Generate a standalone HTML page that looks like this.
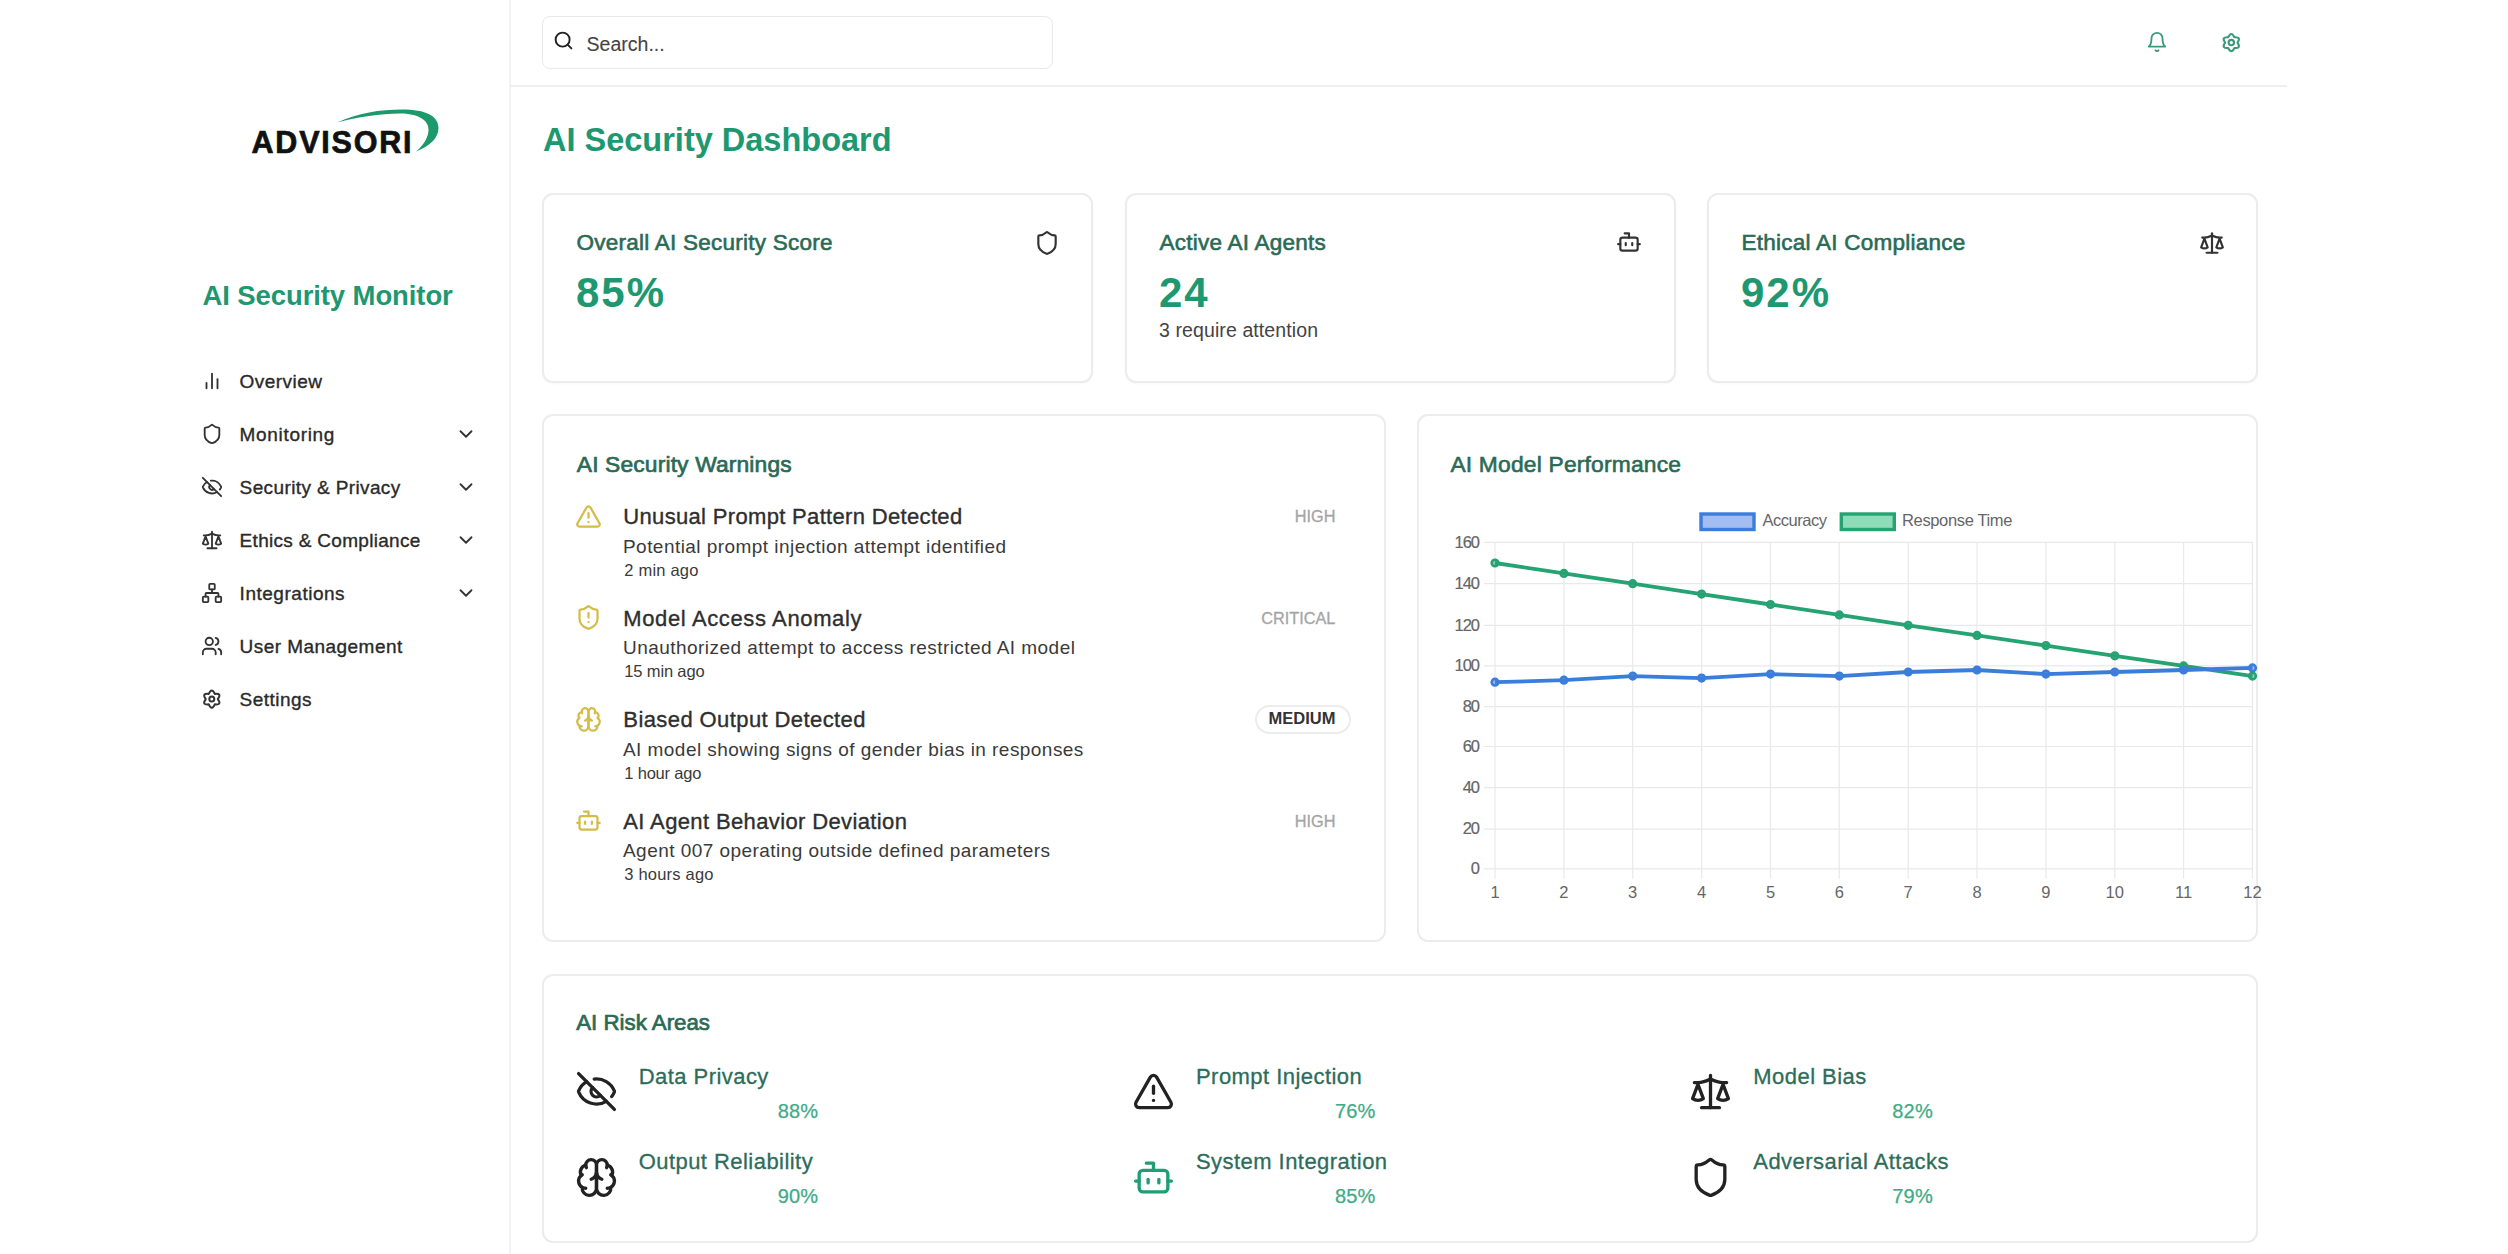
<!DOCTYPE html>
<html><head><meta charset="utf-8"><title>AI Security Dashboard</title>
<style>
html,body{margin:0;padding:0;background:#fff;}
body{width:2508px;height:1254px;position:relative;overflow:hidden;font-family:"Liberation Sans", sans-serif;}
.t{position:absolute;white-space:nowrap;}
.r{position:absolute;}
.i{position:absolute;overflow:visible;}
</style></head><body>
<div class="r" style="left:508.5px;top:0px;width:2px;height:1254px;background:#f3f3f3;"></div>
<div class="t" style="left:251.5px;top:127.2px;font-size:30.5px;line-height:30.5px;color:#111;font-weight:700;letter-spacing:1.8px;-webkit-text-stroke:0.7px #111;">ADVISORI</div>
<svg class="i" style="left:330px;top:100px;width:115px;height:60px" viewBox="0 0 115 60"><path d="M7,22.5 C28,13 50,9.5 72,9.5 C96,9.5 108.5,16 108.5,28 C108.5,38 100,46 86,51.5 C95,44 98.5,36 98.5,29.5 C98.5,20 88,13.5 70,13.5 C50,13.5 28,17 7,22.5 Z" fill="#1d9a6c"/></svg>
<div class="t" style="left:202.5px;top:281.7px;font-size:27.5px;line-height:27.5px;color:#1d9870;font-weight:700;letter-spacing:-0.1px;">AI Security Monitor</div>
<svg class="i" style="left:201px;top:369.5px;width:22px;height:22px" viewBox="0 0 24 24" fill="none" stroke="#333" stroke-width="2" stroke-linecap="round" stroke-linejoin="round"><line x1="18" x2="18" y1="20" y2="10"/><line x1="12" x2="12" y1="20" y2="4"/><line x1="6" x2="6" y1="20" y2="14"/></svg>
<div class="t" style="left:239.6px;top:371.7px;font-size:19px;line-height:19px;color:#2a2a2a;font-weight:400;-webkit-text-stroke:0.35px #2a2a2a;letter-spacing:0.45px;">Overview</div>
<svg class="i" style="left:201px;top:422.6px;width:22px;height:22px" viewBox="0 0 24 24" fill="none" stroke="#333" stroke-width="2" stroke-linecap="round" stroke-linejoin="round"><path d="M20 13c0 5-3.5 7.5-7.66 8.95a1 1 0 0 1-.67-.01C7.5 20.5 4 18 4 13V6a1 1 0 0 1 1-1c2 0 4.5-1.2 6.24-2.72a1.17 1.17 0 0 1 1.52 0C14.51 3.81 17 5 19 5a1 1 0 0 1 1 1z"/></svg>
<div class="t" style="left:239.6px;top:424.8px;font-size:19px;line-height:19px;color:#2a2a2a;font-weight:400;-webkit-text-stroke:0.35px #2a2a2a;letter-spacing:0.68px;">Monitoring</div>
<svg class="i" style="left:455px;top:422.6px;width:22px;height:22px" viewBox="0 0 24 24" fill="none" stroke="#333" stroke-width="2" stroke-linecap="round" stroke-linejoin="round"><path d="m6 9 6 6 6-6"/></svg>
<svg class="i" style="left:201px;top:475.7px;width:22px;height:22px" viewBox="0 0 24 24" fill="none" stroke="#333" stroke-width="2" stroke-linecap="round" stroke-linejoin="round"><path d="M10.733 5.076a10.744 10.744 0 0 1 11.205 6.575 1 1 0 0 1 0 .696 10.747 10.747 0 0 1-1.444 2.49"/><path d="M14.084 14.158a3 3 0 0 1-4.242-4.242"/><path d="M17.479 17.499a10.75 10.75 0 0 1-15.417-5.151 1 1 0 0 1 0-.696 10.75 10.75 0 0 1 4.446-5.143"/><path d="m2 2 20 20"/></svg>
<div class="t" style="left:239.6px;top:477.9px;font-size:19px;line-height:19px;color:#2a2a2a;font-weight:400;-webkit-text-stroke:0.35px #2a2a2a;letter-spacing:0.38px;">Security &amp; Privacy</div>
<svg class="i" style="left:455px;top:475.7px;width:22px;height:22px" viewBox="0 0 24 24" fill="none" stroke="#333" stroke-width="2" stroke-linecap="round" stroke-linejoin="round"><path d="m6 9 6 6 6-6"/></svg>
<svg class="i" style="left:201px;top:528.8px;width:22px;height:22px" viewBox="0 0 24 24" fill="none" stroke="#333" stroke-width="2" stroke-linecap="round" stroke-linejoin="round"><path d="m16 16 3-8 3 8c-.87.65-1.92 1-3 1s-2.13-.35-3-1Z"/><path d="m2 16 3-8 3 8c-.87.65-1.92 1-3 1s-2.13-.35-3-1Z"/><path d="M7 21h10"/><path d="M12 3v18"/><path d="M3 7h2c2 0 5-1 7-2 2 1 5 2 7 2h2"/></svg>
<div class="t" style="left:239.6px;top:531.0px;font-size:19px;line-height:19px;color:#2a2a2a;font-weight:400;-webkit-text-stroke:0.35px #2a2a2a;letter-spacing:0.3px;">Ethics &amp; Compliance</div>
<svg class="i" style="left:455px;top:528.8px;width:22px;height:22px" viewBox="0 0 24 24" fill="none" stroke="#333" stroke-width="2" stroke-linecap="round" stroke-linejoin="round"><path d="m6 9 6 6 6-6"/></svg>
<svg class="i" style="left:201px;top:581.9px;width:22px;height:22px" viewBox="0 0 24 24" fill="none" stroke="#333" stroke-width="2" stroke-linecap="round" stroke-linejoin="round"><rect x="16" y="16" width="6" height="6" rx="1"/><rect x="2" y="16" width="6" height="6" rx="1"/><rect x="9" y="2" width="6" height="6" rx="1"/><path d="M5 16v-3a1 1 0 0 1 1-1h12a1 1 0 0 1 1 1v3"/><path d="M12 12V8"/></svg>
<div class="t" style="left:239.6px;top:584.1px;font-size:19px;line-height:19px;color:#2a2a2a;font-weight:400;-webkit-text-stroke:0.35px #2a2a2a;letter-spacing:0.52px;">Integrations</div>
<svg class="i" style="left:455px;top:581.9px;width:22px;height:22px" viewBox="0 0 24 24" fill="none" stroke="#333" stroke-width="2" stroke-linecap="round" stroke-linejoin="round"><path d="m6 9 6 6 6-6"/></svg>
<svg class="i" style="left:201px;top:635.0px;width:22px;height:22px" viewBox="0 0 24 24" fill="none" stroke="#333" stroke-width="2" stroke-linecap="round" stroke-linejoin="round"><path d="M16 21v-2a4 4 0 0 0-4-4H6a4 4 0 0 0-4 4v2"/><circle cx="9" cy="7" r="4"/><path d="M22 21v-2a4 4 0 0 0-3-3.87"/><path d="M16 3.13a4 4 0 0 1 0 7.75"/></svg>
<div class="t" style="left:239.6px;top:637.2px;font-size:19px;line-height:19px;color:#2a2a2a;font-weight:400;-webkit-text-stroke:0.35px #2a2a2a;letter-spacing:0.45px;">User Management</div>
<svg class="i" style="left:0;top:0;width:2508px;height:1254px;pointer-events:none" viewBox="0 0 2508 1254"><path d="M208.80,693.90 Q211.80,687.10 214.80,693.90 Q222.20,693.10 217.80,699.10 Q222.20,705.10 214.80,704.30 Q211.80,711.10 208.80,704.30 Q201.40,705.10 205.80,699.10 Q201.40,693.10 208.80,693.90 Z" fill="none" stroke="#333" stroke-width="2" stroke-linejoin="round"/><circle cx="211.8" cy="699.1" r="2.5" fill="none" stroke="#333" stroke-width="2"/></svg>
<div class="t" style="left:239.6px;top:690.3px;font-size:19px;line-height:19px;color:#2a2a2a;font-weight:400;-webkit-text-stroke:0.35px #2a2a2a;letter-spacing:0.47px;">Settings</div>
<div class="r" style="left:510px;top:85px;width:1777px;height:2px;background:#efefef;"></div>
<div class="r" style="left:542px;top:16px;width:511px;height:53px;box-sizing:border-box;border:1.5px solid #e9e9e9;border-radius:8px;background:#fff;"></div>
<svg class="i" style="left:553px;top:30px;width:21px;height:21px" viewBox="0 0 24 24" fill="none" stroke="#222" stroke-width="2.2" stroke-linecap="round" stroke-linejoin="round"><circle cx="11" cy="11" r="8"/><path d="m21 21-4.3-4.3"/></svg>
<div class="t" style="left:586.6px;top:34.5px;font-size:19.5px;line-height:19.5px;color:#444;font-weight:400;-webkit-text-stroke:0.1px #444;">Search...</div>
<svg class="i" style="left:2146px;top:31px;width:22px;height:22px" viewBox="0 0 24 24" fill="none" stroke="#3a9a7a" stroke-width="2" stroke-linecap="round" stroke-linejoin="round"><path d="M6 8a6 6 0 0 1 12 0c0 7 3 9 3 9H3s3-2 3-9"/><path d="M10.3 21a1.94 1.94 0 0 0 3.4 0"/></svg>
<svg class="i" style="left:0;top:0;width:2508px;height:1254px;pointer-events:none" viewBox="0 0 2508 1254"><path d="M2228.20,37.23 Q2231.30,30.77 2234.40,37.23 Q2241.55,36.68 2237.50,42.60 Q2241.55,48.52 2234.40,47.97 Q2231.30,54.43 2228.20,47.97 Q2221.05,48.52 2225.10,42.60 Q2221.05,36.68 2228.20,37.23 Z" fill="none" stroke="#3a9a7a" stroke-width="2.1" stroke-linejoin="round"/><circle cx="2231.3" cy="42.6" r="2.7" fill="none" stroke="#3a9a7a" stroke-width="2.1"/></svg>
<div class="t" style="left:543.0px;top:124.0px;font-size:32.5px;line-height:32.5px;color:#1d9870;font-weight:700;">AI Security Dashboard</div>
<div class="r" style="left:542px;top:193px;width:551px;height:190px;box-sizing:border-box;border:2px solid #ececec;border-radius:11px;background:#fff;box-shadow:0 1px 2px rgba(0,0,0,0.03);"></div>
<div class="t" style="left:576.5px;top:231.6px;font-size:22.5px;line-height:22.5px;color:#2a6a56;font-weight:400;-webkit-text-stroke:0.6px #2a6a56;letter-spacing:0.25px;">Overall AI Security Score</div>
<div class="t" style="left:576.0px;top:271.7px;font-size:42px;line-height:42px;color:#1d9870;font-weight:700;letter-spacing:2.0px;">85%</div>
<svg class="i" style="left:1034px;top:230px;width:26px;height:26px" viewBox="0 0 24 24" fill="none" stroke="#333" stroke-width="2" stroke-linecap="round" stroke-linejoin="round"><path d="M20 13c0 5-3.5 7.5-7.66 8.95a1 1 0 0 1-.67-.01C7.5 20.5 4 18 4 13V6a1 1 0 0 1 1-1c2 0 4.5-1.2 6.24-2.72a1.17 1.17 0 0 1 1.52 0C14.51 3.81 17 5 19 5a1 1 0 0 1 1 1z"/></svg>
<div class="r" style="left:1125px;top:193px;width:551px;height:190px;box-sizing:border-box;border:2px solid #ececec;border-radius:11px;background:#fff;box-shadow:0 1px 2px rgba(0,0,0,0.03);"></div>
<div class="t" style="left:1159.5px;top:231.6px;font-size:22.5px;line-height:22.5px;color:#2a6a56;font-weight:400;-webkit-text-stroke:0.6px #2a6a56;letter-spacing:0.25px;">Active AI Agents</div>
<div class="t" style="left:1159.0px;top:271.7px;font-size:42px;line-height:42px;color:#1d9870;font-weight:700;letter-spacing:2.0px;">24</div>
<div class="t" style="left:1159.0px;top:320.7px;font-size:19.5px;line-height:19.5px;color:#444;font-weight:400;letter-spacing:0.1px;">3 require attention</div>
<svg class="i" style="left:1615.5px;top:229px;width:26px;height:26px" viewBox="0 0 24 24" fill="none" stroke="#333" stroke-width="2" stroke-linecap="round" stroke-linejoin="round"><path d="M12 8V4H8"/><rect width="16" height="12" x="4" y="8" rx="2"/><path d="M2 14h2"/><path d="M20 14h2"/><path d="M15 13v2"/><path d="M9 13v2"/></svg>
<div class="r" style="left:1707px;top:193px;width:551px;height:190px;box-sizing:border-box;border:2px solid #ececec;border-radius:11px;background:#fff;box-shadow:0 1px 2px rgba(0,0,0,0.03);"></div>
<div class="t" style="left:1741.5px;top:231.6px;font-size:22.5px;line-height:22.5px;color:#2a6a56;font-weight:400;-webkit-text-stroke:0.6px #2a6a56;letter-spacing:0.25px;">Ethical AI Compliance</div>
<div class="t" style="left:1741.0px;top:271.7px;font-size:42px;line-height:42px;color:#1d9870;font-weight:700;letter-spacing:2.0px;">92%</div>
<svg class="i" style="left:2199px;top:230px;width:26px;height:26px" viewBox="0 0 24 24" fill="none" stroke="#333" stroke-width="2" stroke-linecap="round" stroke-linejoin="round"><path d="m16 16 3-8 3 8c-.87.65-1.92 1-3 1s-2.13-.35-3-1Z"/><path d="m2 16 3-8 3 8c-.87.65-1.92 1-3 1s-2.13-.35-3-1Z"/><path d="M7 21h10"/><path d="M12 3v18"/><path d="M3 7h2c2 0 5-1 7-2 2 1 5 2 7 2h2"/></svg>
<div class="r" style="left:542px;top:414px;width:843.5px;height:528px;box-sizing:border-box;border:2px solid #ececec;border-radius:11px;background:#fff;"></div>
<div class="t" style="left:576.8px;top:452.8px;font-size:22.8px;line-height:22.8px;color:#2a6a56;font-weight:400;-webkit-text-stroke:0.7px #2a6a56;letter-spacing:0.15px;">AI Security Warnings</div>
<svg class="i" style="left:575px;top:502.5px;width:27px;height:27px" viewBox="0 0 24 24" fill="none" stroke="#d4bc48" stroke-width="2" stroke-linecap="round" stroke-linejoin="round"><path d="m21.73 18-8-14a2 2 0 0 0-3.48 0l-8 14A2 2 0 0 0 4 21h16a2 2 0 0 0 1.73-3"/><path d="M12 9v4"/><path d="M12 17h.01"/></svg>
<div class="t" style="left:623.3px;top:506.3px;font-size:22px;line-height:22px;color:#2e2e2e;font-weight:400;-webkit-text-stroke:0.35px #2e2e2e;letter-spacing:0.33px;">Unusual Prompt Pattern Detected</div>
<div class="t" style="left:623.0px;top:536.5px;font-size:19px;line-height:19px;color:#3a3a3a;font-weight:400;letter-spacing:0.45px;">Potential prompt injection attempt identified</div>
<div class="t" style="left:624.3px;top:561.6px;font-size:16.5px;line-height:16.5px;color:#3a3a3a;font-weight:400;letter-spacing:0.2px;">2 min ago</div>
<div class="t" style="right:1172.6px;top:508.2px;font-size:16.3px;line-height:16.3px;color:#a5a5a5;font-weight:400;-webkit-text-stroke:0.3px #a5a5a5;text-align:right;">HIGH</div>
<svg class="i" style="left:575px;top:604.0px;width:27px;height:27px" viewBox="0 0 24 24" fill="none" stroke="#d4bc48" stroke-width="2" stroke-linecap="round" stroke-linejoin="round"><path d="M20 13c0 5-3.5 7.5-7.66 8.95a1 1 0 0 1-.67-.01C7.5 20.5 4 18 4 13V6a1 1 0 0 1 1-1c2 0 4.5-1.2 6.24-2.72a1.17 1.17 0 0 1 1.52 0C14.51 3.81 17 5 19 5a1 1 0 0 1 1 1z"/><path d="M12 8v4"/><path d="M12 16h.01"/></svg>
<div class="t" style="left:623.3px;top:607.8px;font-size:22px;line-height:22px;color:#2e2e2e;font-weight:400;-webkit-text-stroke:0.35px #2e2e2e;letter-spacing:0.63px;">Model Access Anomaly</div>
<div class="t" style="left:623.0px;top:638.0px;font-size:19px;line-height:19px;color:#3a3a3a;font-weight:400;letter-spacing:0.45px;">Unauthorized attempt to access restricted AI model</div>
<div class="t" style="left:624.3px;top:663.1px;font-size:16.5px;line-height:16.5px;color:#3a3a3a;font-weight:400;letter-spacing:-0.15px;">15 min ago</div>
<div class="t" style="right:1172.6px;top:609.7px;font-size:16.3px;line-height:16.3px;color:#a5a5a5;font-weight:400;-webkit-text-stroke:0.3px #a5a5a5;text-align:right;">CRITICAL</div>
<svg class="i" style="left:575px;top:705.5px;width:27px;height:27px" viewBox="0 0 24 24" fill="none" stroke="#d4bc48" stroke-width="2" stroke-linecap="round" stroke-linejoin="round"><path d="M12 5a3 3 0 1 0-5.997.125 4 4 0 0 0-2.526 5.77 4 4 0 0 0 .556 6.588A4 4 0 1 0 12 18Z"/><path d="M12 5a3 3 0 1 1 5.997.125 4 4 0 0 1 2.526 5.77 4 4 0 0 1-.556 6.588A4 4 0 1 1 12 18Z"/><path d="M15 13a4.5 4.5 0 0 1-3-4 4.5 4.5 0 0 1-3 4"/><path d="M17.599 6.5a3 3 0 0 0 .399-1.375"/><path d="M6.003 5.125A3 3 0 0 0 6.401 6.5"/><path d="M3.477 10.896a4 4 0 0 1 .585-.396"/><path d="M19.938 10.5a4 4 0 0 1 .585.396"/><path d="M6 18a4 4 0 0 1-1.967-.516"/><path d="M19.967 17.484A4 4 0 0 1 18 18"/></svg>
<div class="t" style="left:623.3px;top:709.3px;font-size:22px;line-height:22px;color:#2e2e2e;font-weight:400;-webkit-text-stroke:0.35px #2e2e2e;letter-spacing:0.41px;">Biased Output Detected</div>
<div class="t" style="left:623.0px;top:739.5px;font-size:19px;line-height:19px;color:#3a3a3a;font-weight:400;letter-spacing:0.45px;">AI model showing signs of gender bias in responses</div>
<div class="t" style="left:624.3px;top:764.6px;font-size:16.5px;line-height:16.5px;color:#3a3a3a;font-weight:400;letter-spacing:-0.2px;">1 hour ago</div>
<div class="r" style="left:1255px;top:704.5px;width:96px;height:29px;box-sizing:border-box;border:2px solid #ececec;border-radius:15px;"></div>
<div class="t" style="right:1172.6px;top:710.0px;font-size:16.5px;line-height:16.5px;color:#333;font-weight:700;text-align:right;">MEDIUM</div>
<svg class="i" style="left:575px;top:807.0px;width:27px;height:27px" viewBox="0 0 24 24" fill="none" stroke="#d4bc48" stroke-width="2" stroke-linecap="round" stroke-linejoin="round"><path d="M12 8V4H8"/><rect width="16" height="12" x="4" y="8" rx="2"/><path d="M2 14h2"/><path d="M20 14h2"/><path d="M15 13v2"/><path d="M9 13v2"/></svg>
<div class="t" style="left:623.3px;top:810.8px;font-size:22px;line-height:22px;color:#2e2e2e;font-weight:400;-webkit-text-stroke:0.35px #2e2e2e;letter-spacing:0.37px;">AI Agent Behavior Deviation</div>
<div class="t" style="left:623.0px;top:841.0px;font-size:19px;line-height:19px;color:#3a3a3a;font-weight:400;letter-spacing:0.45px;">Agent 007 operating outside defined parameters</div>
<div class="t" style="left:624.3px;top:866.1px;font-size:16.5px;line-height:16.5px;color:#3a3a3a;font-weight:400;letter-spacing:0.2px;">3 hours ago</div>
<div class="t" style="right:1172.6px;top:812.7px;font-size:16.3px;line-height:16.3px;color:#a5a5a5;font-weight:400;-webkit-text-stroke:0.3px #a5a5a5;text-align:right;">HIGH</div>
<div class="r" style="left:1417px;top:414px;width:841px;height:528px;box-sizing:border-box;border:2px solid #ececec;border-radius:11px;background:#fff;"></div>
<div class="t" style="left:1450.4px;top:452.7px;font-size:22.8px;line-height:22.8px;color:#2a6a56;font-weight:400;-webkit-text-stroke:0.6px #2a6a56;letter-spacing:0.2px;">AI Model Performance</div>
<svg class="i" style="left:0;top:0;width:2508px;height:1254px" viewBox="0 0 2508 1254"><line x1="1484" x2="2252.5" y1="868.9" y2="868.9" stroke="#e8e9ec" stroke-width="1.2"/><line x1="1484" x2="2252.5" y1="829.1" y2="829.1" stroke="#e8e9ec" stroke-width="1.2"/><line x1="1484" x2="2252.5" y1="787.7" y2="787.7" stroke="#e8e9ec" stroke-width="1.2"/><line x1="1484" x2="2252.5" y1="746.5" y2="746.5" stroke="#e8e9ec" stroke-width="1.2"/><line x1="1484" x2="2252.5" y1="706.7" y2="706.7" stroke="#e8e9ec" stroke-width="1.2"/><line x1="1484" x2="2252.5" y1="665.9" y2="665.9" stroke="#e8e9ec" stroke-width="1.2"/><line x1="1484" x2="2252.5" y1="625.3" y2="625.3" stroke="#e8e9ec" stroke-width="1.2"/><line x1="1484" x2="2252.5" y1="583.7" y2="583.7" stroke="#e8e9ec" stroke-width="1.2"/><line x1="1484" x2="2252.5" y1="542.3" y2="542.3" stroke="#e8e9ec" stroke-width="1.2"/><line x1="1495.0" x2="1495.0" y1="542.3" y2="878.8" stroke="#e8e9ec" stroke-width="1.2"/><line x1="1563.9" x2="1563.9" y1="542.3" y2="878.8" stroke="#e8e9ec" stroke-width="1.2"/><line x1="1632.7" x2="1632.7" y1="542.3" y2="878.8" stroke="#e8e9ec" stroke-width="1.2"/><line x1="1701.6" x2="1701.6" y1="542.3" y2="878.8" stroke="#e8e9ec" stroke-width="1.2"/><line x1="1770.5" x2="1770.5" y1="542.3" y2="878.8" stroke="#e8e9ec" stroke-width="1.2"/><line x1="1839.3" x2="1839.3" y1="542.3" y2="878.8" stroke="#e8e9ec" stroke-width="1.2"/><line x1="1908.2" x2="1908.2" y1="542.3" y2="878.8" stroke="#e8e9ec" stroke-width="1.2"/><line x1="1977.0" x2="1977.0" y1="542.3" y2="878.8" stroke="#e8e9ec" stroke-width="1.2"/><line x1="2045.9" x2="2045.9" y1="542.3" y2="878.8" stroke="#e8e9ec" stroke-width="1.2"/><line x1="2114.8" x2="2114.8" y1="542.3" y2="878.8" stroke="#e8e9ec" stroke-width="1.2"/><line x1="2183.6" x2="2183.6" y1="542.3" y2="878.8" stroke="#e8e9ec" stroke-width="1.2"/><line x1="2252.5" x2="2252.5" y1="542.3" y2="878.8" stroke="#e8e9ec" stroke-width="1.2"/><polyline points="1495.0,563.0 1563.9,573.4 1632.7,583.7 1701.6,594.1 1770.5,604.5 1839.3,614.9 1908.2,625.3 1977.0,635.4 2045.9,645.6 2114.8,655.8 2183.6,665.9 2252.5,676.1" fill="none" stroke="#26a372" stroke-width="3.8" stroke-linejoin="round"/><circle cx="1495.0" cy="563.0" r="3.3" fill="#26a372" fill-opacity="0.5" stroke="#26a372" stroke-width="2.6"/><circle cx="1563.9" cy="573.4" r="3.3" fill="#26a372" fill-opacity="0.5" stroke="#26a372" stroke-width="2.6"/><circle cx="1632.7" cy="583.7" r="3.3" fill="#26a372" fill-opacity="0.5" stroke="#26a372" stroke-width="2.6"/><circle cx="1701.6" cy="594.1" r="3.3" fill="#26a372" fill-opacity="0.5" stroke="#26a372" stroke-width="2.6"/><circle cx="1770.5" cy="604.5" r="3.3" fill="#26a372" fill-opacity="0.5" stroke="#26a372" stroke-width="2.6"/><circle cx="1839.3" cy="614.9" r="3.3" fill="#26a372" fill-opacity="0.5" stroke="#26a372" stroke-width="2.6"/><circle cx="1908.2" cy="625.3" r="3.3" fill="#26a372" fill-opacity="0.5" stroke="#26a372" stroke-width="2.6"/><circle cx="1977.0" cy="635.4" r="3.3" fill="#26a372" fill-opacity="0.5" stroke="#26a372" stroke-width="2.6"/><circle cx="2045.9" cy="645.6" r="3.3" fill="#26a372" fill-opacity="0.5" stroke="#26a372" stroke-width="2.6"/><circle cx="2114.8" cy="655.8" r="3.3" fill="#26a372" fill-opacity="0.5" stroke="#26a372" stroke-width="2.6"/><circle cx="2183.6" cy="665.9" r="3.3" fill="#26a372" fill-opacity="0.5" stroke="#26a372" stroke-width="2.6"/><circle cx="2252.5" cy="676.1" r="3.3" fill="#26a372" fill-opacity="0.5" stroke="#26a372" stroke-width="2.6"/><polyline points="1495.0,682.2 1563.9,680.2 1632.7,676.1 1701.6,678.1 1770.5,674.1 1839.3,676.1 1908.2,672.0 1977.0,670.0 2045.9,674.1 2114.8,672.0 2183.6,670.0 2252.5,667.9" fill="none" stroke="#3b7ddb" stroke-width="3.8" stroke-linejoin="round"/><circle cx="1495.0" cy="682.2" r="3.3" fill="#3b7ddb" fill-opacity="0.5" stroke="#3b7ddb" stroke-width="2.6"/><circle cx="1563.9" cy="680.2" r="3.3" fill="#3b7ddb" fill-opacity="0.5" stroke="#3b7ddb" stroke-width="2.6"/><circle cx="1632.7" cy="676.1" r="3.3" fill="#3b7ddb" fill-opacity="0.5" stroke="#3b7ddb" stroke-width="2.6"/><circle cx="1701.6" cy="678.1" r="3.3" fill="#3b7ddb" fill-opacity="0.5" stroke="#3b7ddb" stroke-width="2.6"/><circle cx="1770.5" cy="674.1" r="3.3" fill="#3b7ddb" fill-opacity="0.5" stroke="#3b7ddb" stroke-width="2.6"/><circle cx="1839.3" cy="676.1" r="3.3" fill="#3b7ddb" fill-opacity="0.5" stroke="#3b7ddb" stroke-width="2.6"/><circle cx="1908.2" cy="672.0" r="3.3" fill="#3b7ddb" fill-opacity="0.5" stroke="#3b7ddb" stroke-width="2.6"/><circle cx="1977.0" cy="670.0" r="3.3" fill="#3b7ddb" fill-opacity="0.5" stroke="#3b7ddb" stroke-width="2.6"/><circle cx="2045.9" cy="674.1" r="3.3" fill="#3b7ddb" fill-opacity="0.5" stroke="#3b7ddb" stroke-width="2.6"/><circle cx="2114.8" cy="672.0" r="3.3" fill="#3b7ddb" fill-opacity="0.5" stroke="#3b7ddb" stroke-width="2.6"/><circle cx="2183.6" cy="670.0" r="3.3" fill="#3b7ddb" fill-opacity="0.5" stroke="#3b7ddb" stroke-width="2.6"/><circle cx="2252.5" cy="667.9" r="3.3" fill="#3b7ddb" fill-opacity="0.5" stroke="#3b7ddb" stroke-width="2.6"/><rect x="1701" y="514" width="53" height="15.5" fill="#a3bdf3" stroke="#3b7ddb" stroke-width="3.4"/><rect x="1841.3" y="514" width="53" height="15.5" fill="#8fdcb9" stroke="#26a372" stroke-width="3.4"/></svg>
<div class="t" style="left:1762.6px;top:512.0px;font-size:16.5px;line-height:16.5px;color:#666;font-weight:400;letter-spacing:-0.5px;">Accuracy</div>
<div class="t" style="left:1902.0px;top:512.0px;font-size:16.5px;line-height:16.5px;color:#666;font-weight:400;letter-spacing:-0.35px;">Response Time</div>
<div class="t" style="right:1029.0px;top:860.1px;font-size:16.5px;line-height:16.5px;color:#666;font-weight:400;-webkit-text-stroke:0.2px #666;text-align:right;letter-spacing:-1.0px;">0</div>
<div class="t" style="right:1029.0px;top:820.3px;font-size:16.5px;line-height:16.5px;color:#666;font-weight:400;-webkit-text-stroke:0.2px #666;text-align:right;letter-spacing:-1.0px;">20</div>
<div class="t" style="right:1029.0px;top:778.9px;font-size:16.5px;line-height:16.5px;color:#666;font-weight:400;-webkit-text-stroke:0.2px #666;text-align:right;letter-spacing:-1.0px;">40</div>
<div class="t" style="right:1029.0px;top:737.7px;font-size:16.5px;line-height:16.5px;color:#666;font-weight:400;-webkit-text-stroke:0.2px #666;text-align:right;letter-spacing:-1.0px;">60</div>
<div class="t" style="right:1029.0px;top:697.9px;font-size:16.5px;line-height:16.5px;color:#666;font-weight:400;-webkit-text-stroke:0.2px #666;text-align:right;letter-spacing:-1.0px;">80</div>
<div class="t" style="right:1029.0px;top:657.1px;font-size:16.5px;line-height:16.5px;color:#666;font-weight:400;-webkit-text-stroke:0.2px #666;text-align:right;letter-spacing:-1.0px;">100</div>
<div class="t" style="right:1029.0px;top:616.5px;font-size:16.5px;line-height:16.5px;color:#666;font-weight:400;-webkit-text-stroke:0.2px #666;text-align:right;letter-spacing:-1.0px;">120</div>
<div class="t" style="right:1029.0px;top:574.9px;font-size:16.5px;line-height:16.5px;color:#666;font-weight:400;-webkit-text-stroke:0.2px #666;text-align:right;letter-spacing:-1.0px;">140</div>
<div class="t" style="right:1029.0px;top:533.5px;font-size:16.5px;line-height:16.5px;color:#666;font-weight:400;-webkit-text-stroke:0.2px #666;text-align:right;letter-spacing:-1.0px;">160</div>
<div class="t" style="left:1465.0px;width:60px;text-align:center;top:883.5px;font-size:16.5px;line-height:16.5px;color:#666">1</div>
<div class="t" style="left:1533.9px;width:60px;text-align:center;top:883.5px;font-size:16.5px;line-height:16.5px;color:#666">2</div>
<div class="t" style="left:1602.7px;width:60px;text-align:center;top:883.5px;font-size:16.5px;line-height:16.5px;color:#666">3</div>
<div class="t" style="left:1671.6px;width:60px;text-align:center;top:883.5px;font-size:16.5px;line-height:16.5px;color:#666">4</div>
<div class="t" style="left:1740.5px;width:60px;text-align:center;top:883.5px;font-size:16.5px;line-height:16.5px;color:#666">5</div>
<div class="t" style="left:1809.3px;width:60px;text-align:center;top:883.5px;font-size:16.5px;line-height:16.5px;color:#666">6</div>
<div class="t" style="left:1878.2px;width:60px;text-align:center;top:883.5px;font-size:16.5px;line-height:16.5px;color:#666">7</div>
<div class="t" style="left:1947.0px;width:60px;text-align:center;top:883.5px;font-size:16.5px;line-height:16.5px;color:#666">8</div>
<div class="t" style="left:2015.9px;width:60px;text-align:center;top:883.5px;font-size:16.5px;line-height:16.5px;color:#666">9</div>
<div class="t" style="left:2084.8px;width:60px;text-align:center;top:883.5px;font-size:16.5px;line-height:16.5px;color:#666">10</div>
<div class="t" style="left:2153.6px;width:60px;text-align:center;top:883.5px;font-size:16.5px;line-height:16.5px;color:#666">11</div>
<div class="t" style="left:2222.5px;width:60px;text-align:center;top:883.5px;font-size:16.5px;line-height:16.5px;color:#666">12</div>
<div class="r" style="left:542px;top:974px;width:1716px;height:269px;box-sizing:border-box;border:2px solid #ececec;border-radius:11px;background:#fff;"></div>
<div class="t" style="left:576.2px;top:1012.1px;font-size:22.3px;line-height:22.3px;color:#2a6a56;font-weight:400;-webkit-text-stroke:0.7px #2a6a56;">AI Risk Areas</div>
<svg class="i" style="left:575.1px;top:1070.4px;width:43px;height:43px" viewBox="0 0 24 24" fill="none" stroke="#222" stroke-width="1.85" stroke-linecap="round" stroke-linejoin="round"><path d="M10.733 5.076a10.744 10.744 0 0 1 11.205 6.575 1 1 0 0 1 0 .696 10.747 10.747 0 0 1-1.444 2.49"/><path d="M14.084 14.158a3 3 0 0 1-4.242-4.242"/><path d="M17.479 17.499a10.75 10.75 0 0 1-15.417-5.151 1 1 0 0 1 0-.696 10.75 10.75 0 0 1 4.446-5.143"/><path d="m2 2 20 20"/></svg>
<div class="t" style="left:638.7px;top:1065.8px;font-size:22px;line-height:22px;color:#2e6c5a;font-weight:400;-webkit-text-stroke:0.3px #2e6c5a;letter-spacing:0.45px;">Data Privacy</div>
<div class="t" style="right:1689.7px;top:1101.0px;font-size:20px;line-height:20px;color:#40ab86;font-weight:400;-webkit-text-stroke:0.25px #40ab86;text-align:right;letter-spacing:0.2px;">88%</div>
<svg class="i" style="left:575.1px;top:1155.8px;width:43px;height:43px" viewBox="0 0 24 24" fill="none" stroke="#222" stroke-width="1.85" stroke-linecap="round" stroke-linejoin="round"><path d="M12 5a3 3 0 1 0-5.997.125 4 4 0 0 0-2.526 5.77 4 4 0 0 0 .556 6.588A4 4 0 1 0 12 18Z"/><path d="M12 5a3 3 0 1 1 5.997.125 4 4 0 0 1 2.526 5.77 4 4 0 0 1-.556 6.588A4 4 0 1 1 12 18Z"/><path d="M15 13a4.5 4.5 0 0 1-3-4 4.5 4.5 0 0 1-3 4"/><path d="M17.599 6.5a3 3 0 0 0 .399-1.375"/><path d="M6.003 5.125A3 3 0 0 0 6.401 6.5"/><path d="M3.477 10.896a4 4 0 0 1 .585-.396"/><path d="M19.938 10.5a4 4 0 0 1 .585.396"/><path d="M6 18a4 4 0 0 1-1.967-.516"/><path d="M19.967 17.484A4 4 0 0 1 18 18"/></svg>
<div class="t" style="left:638.7px;top:1151.1px;font-size:22px;line-height:22px;color:#2e6c5a;font-weight:400;-webkit-text-stroke:0.3px #2e6c5a;letter-spacing:0.45px;">Output Reliability</div>
<div class="t" style="right:1689.7px;top:1186.3px;font-size:20px;line-height:20px;color:#40ab86;font-weight:400;-webkit-text-stroke:0.25px #40ab86;text-align:right;letter-spacing:0.2px;">90%</div>
<svg class="i" style="left:1132.2px;top:1070.4px;width:43px;height:43px" viewBox="0 0 24 24" fill="none" stroke="#222" stroke-width="1.85" stroke-linecap="round" stroke-linejoin="round"><path d="m21.73 18-8-14a2 2 0 0 0-3.48 0l-8 14A2 2 0 0 0 4 21h16a2 2 0 0 0 1.73-3"/><path d="M12 9v4"/><path d="M12 17h.01"/></svg>
<div class="t" style="left:1196.0px;top:1065.8px;font-size:22px;line-height:22px;color:#2e6c5a;font-weight:400;-webkit-text-stroke:0.3px #2e6c5a;letter-spacing:0.45px;">Prompt Injection</div>
<div class="t" style="right:1132.4px;top:1101.0px;font-size:20px;line-height:20px;color:#40ab86;font-weight:400;-webkit-text-stroke:0.25px #40ab86;text-align:right;letter-spacing:0.2px;">76%</div>
<svg class="i" style="left:1132.2px;top:1155.8px;width:43px;height:43px" viewBox="0 0 24 24" fill="none" stroke="#1f9d73" stroke-width="1.85" stroke-linecap="round" stroke-linejoin="round"><path d="M12 8V4H8"/><rect width="16" height="12" x="4" y="8" rx="2"/><path d="M2 14h2"/><path d="M20 14h2"/><path d="M15 13v2"/><path d="M9 13v2"/></svg>
<div class="t" style="left:1196.0px;top:1151.1px;font-size:22px;line-height:22px;color:#2e6c5a;font-weight:400;-webkit-text-stroke:0.3px #2e6c5a;letter-spacing:0.45px;">System Integration</div>
<div class="t" style="right:1132.4px;top:1186.3px;font-size:20px;line-height:20px;color:#40ab86;font-weight:400;-webkit-text-stroke:0.25px #40ab86;text-align:right;letter-spacing:0.2px;">85%</div>
<svg class="i" style="left:1689.3px;top:1070.4px;width:43px;height:43px" viewBox="0 0 24 24" fill="none" stroke="#222" stroke-width="1.85" stroke-linecap="round" stroke-linejoin="round"><path d="m16 16 3-8 3 8c-.87.65-1.92 1-3 1s-2.13-.35-3-1Z"/><path d="m2 16 3-8 3 8c-.87.65-1.92 1-3 1s-2.13-.35-3-1Z"/><path d="M7 21h10"/><path d="M12 3v18"/><path d="M3 7h2c2 0 5-1 7-2 2 1 5 2 7 2h2"/></svg>
<div class="t" style="left:1753.3px;top:1065.8px;font-size:22px;line-height:22px;color:#2e6c5a;font-weight:400;-webkit-text-stroke:0.3px #2e6c5a;letter-spacing:0.45px;">Model Bias</div>
<div class="t" style="right:575.1px;top:1101.0px;font-size:20px;line-height:20px;color:#40ab86;font-weight:400;-webkit-text-stroke:0.25px #40ab86;text-align:right;letter-spacing:0.2px;">82%</div>
<svg class="i" style="left:1689.3px;top:1155.8px;width:43px;height:43px" viewBox="0 0 24 24" fill="none" stroke="#222" stroke-width="1.85" stroke-linecap="round" stroke-linejoin="round"><path d="M20 13c0 5-3.5 7.5-7.66 8.95a1 1 0 0 1-.67-.01C7.5 20.5 4 18 4 13V6a1 1 0 0 1 1-1c2 0 4.5-1.2 6.24-2.72a1.17 1.17 0 0 1 1.52 0C14.51 3.81 17 5 19 5a1 1 0 0 1 1 1z"/></svg>
<div class="t" style="left:1753.3px;top:1151.1px;font-size:22px;line-height:22px;color:#2e6c5a;font-weight:400;-webkit-text-stroke:0.3px #2e6c5a;letter-spacing:0.45px;">Adversarial Attacks</div>
<div class="t" style="right:575.1px;top:1186.3px;font-size:20px;line-height:20px;color:#40ab86;font-weight:400;-webkit-text-stroke:0.25px #40ab86;text-align:right;letter-spacing:0.2px;">79%</div>
</body></html>
